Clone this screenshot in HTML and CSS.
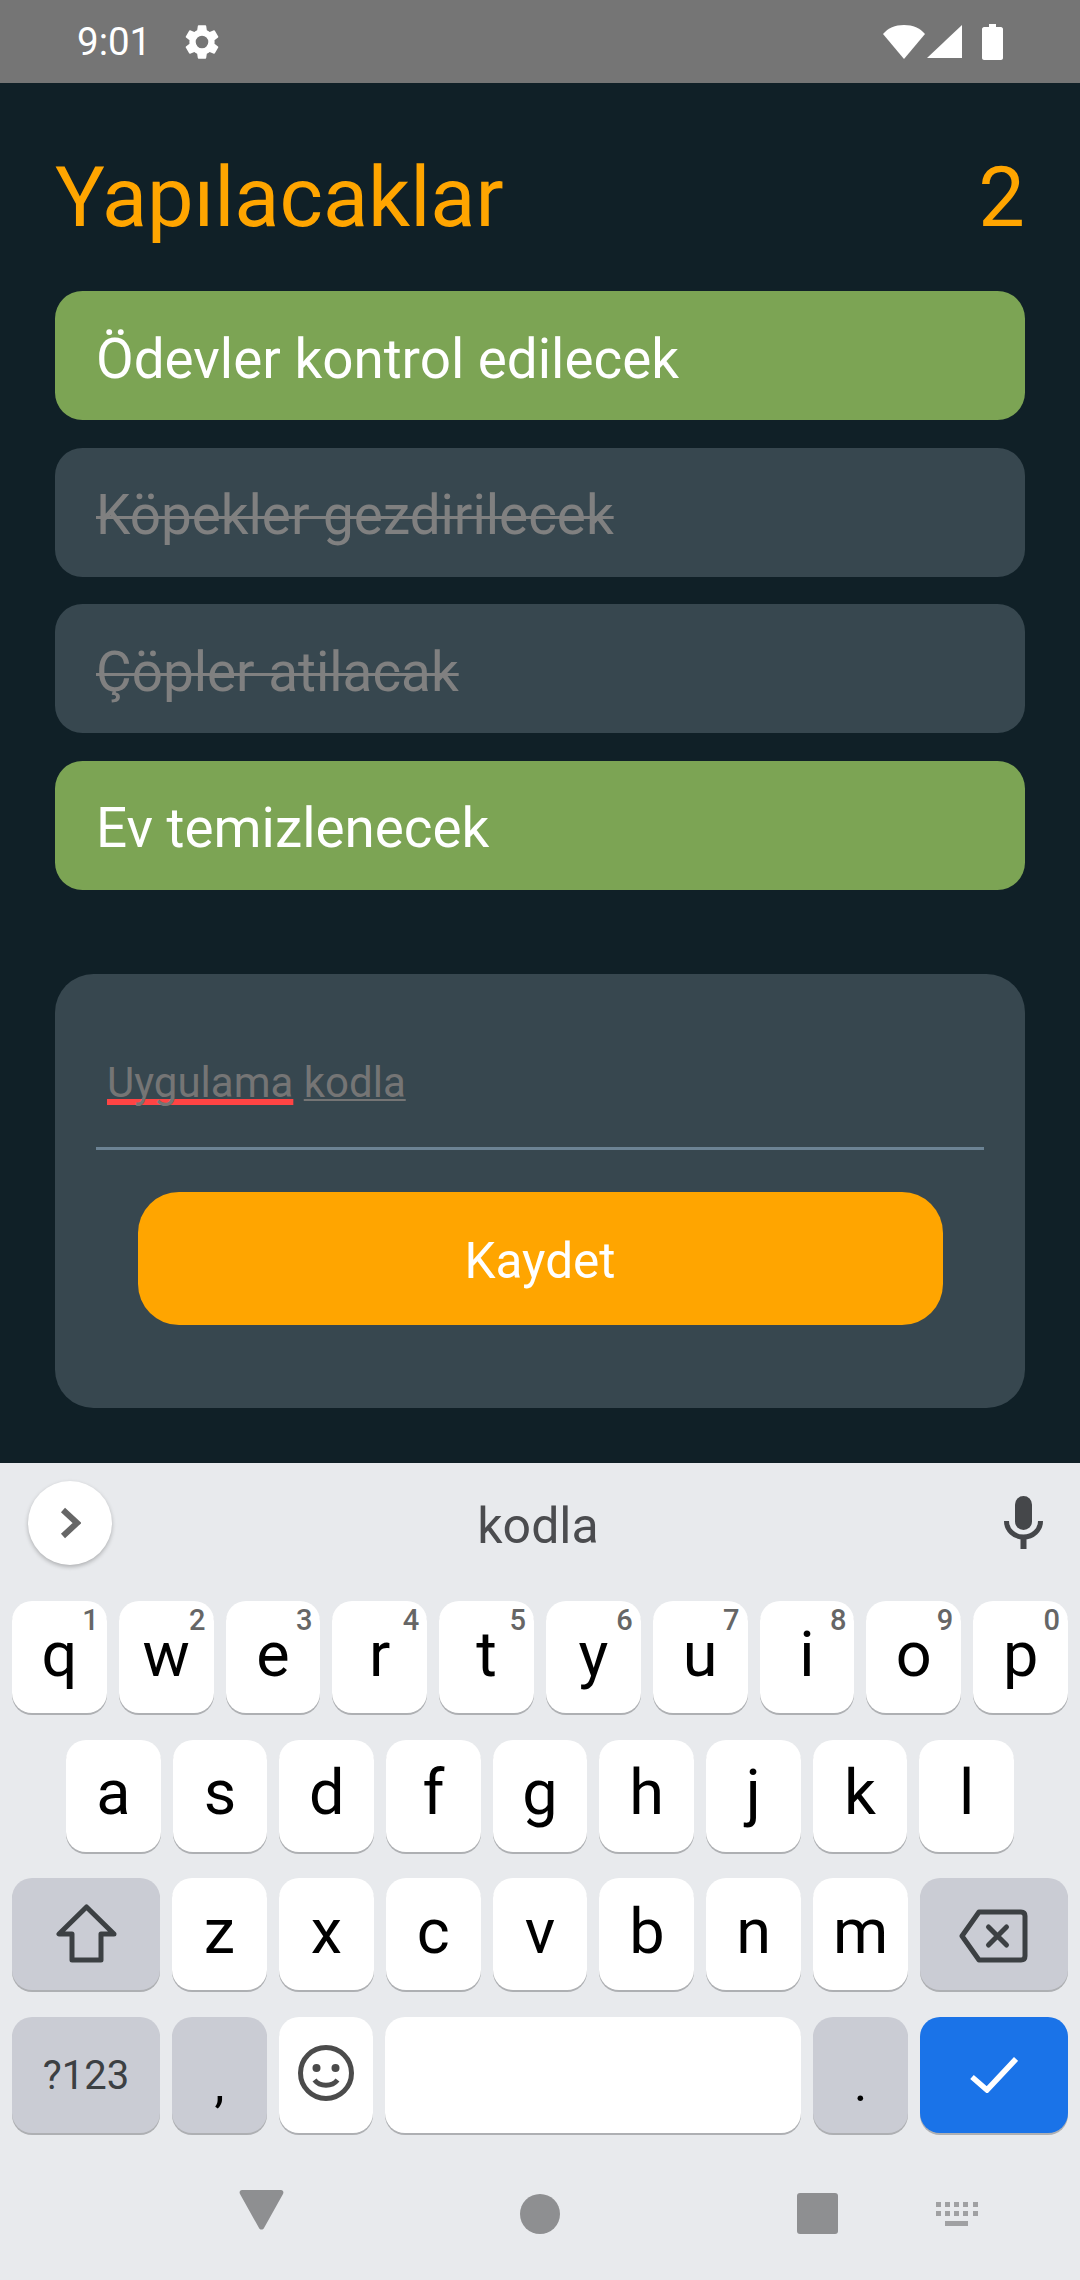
FILE: index.html
```html
<!DOCTYPE html>
<html lang="tr">
<head>
<meta charset="UTF-8" />
<meta name="viewport" content="width=device-width, initial-scale=1" />
<title>Yapılacaklar</title>
<link rel="stylesheet" href="styles.css">
</head>
<body>
  <div class="status-bar">
    <span class="clock">9:01</span>
    <svg class="gear" viewBox="0 0 24 24"><path d="M19.14 12.94c.04-.3.06-.61.06-.94s-.02-.64-.07-.94l2.03-1.58a.49.49 0 0 0 .12-.61l-1.92-3.32a.49.49 0 0 0-.59-.22l-2.39.96a7 7 0 0 0-1.62-.94l-.36-2.54a.48.48 0 0 0-.48-.41h-3.84a.47.47 0 0 0-.47.41l-.36 2.54c-.59.24-1.13.57-1.62.94l-2.39-.96a.48.48 0 0 0-.59.22L2.74 8.87a.48.48 0 0 0 .12.61l2.03 1.58c-.05.3-.09.63-.09.94s.02.64.07.94l-2.03 1.58a.49.49 0 0 0-.12.61l1.92 3.32c.12.22.37.29.59.22l2.39-.96c.5.38 1.03.7 1.62.94l.36 2.54c.05.24.24.41.48.41h3.84c.24 0 .44-.17.47-.41l.36-2.54c.59-.24 1.13-.56 1.62-.94l2.39.96c.22.08.47 0 .59-.22l1.92-3.32a.48.48 0 0 0-.12-.61l-2.01-1.58zM12 15.6a3.6 3.6 0 1 1 0-7.2 3.6 3.6 0 0 1 0 7.2z"/></svg>
    <svg class="wifi" viewBox="0 0 42 34"><path d="M21 0C30 0 37 3 42 9L21 34 0 9C5 3 12 0 21 0Z"/></svg>
    <svg class="signal" viewBox="0 0 35 33"><path d="M35 0V33H0Z"/></svg>
    <svg class="battery" viewBox="0 0 21 36"><path d="M7 0H14V3H19C20 3 21 4 21 5V34C21 35 20 36 19 36H2C1 36 0 35 0 34V5C0 4 1 3 2 3H7Z"/></svg>
  </div>

  <main class="app">
    <header class="app-header">
      <h1>Yapılacaklar</h1>
      <span class="count">2</span>
    </header>

    <ul class="todo-list">
      <li class="todo">Ödevler kontrol edilecek</li>
      <li class="todo done"><span>Köpekler gezdirilecek</span></li>
      <li class="todo done"><span>Çöpler atilacak</span></li>
      <li class="todo">Ev temizlenecek</li>
    </ul>

    <form class="todo-form">
      <div class="todo-input"><span class="misspelled">Uygulama</span> <span class="composing">kodla</span></div>
      <button type="button" class="save">Kaydet</button>
    </form>
  </main>

  <section class="keyboard">
    <div class="suggest">
      <div class="chip">
        <svg viewBox="0 0 21 32"><path d="M3 3L17 16 3 29" /></svg>
      </div>
      <span class="word">kodla</span>
      <svg class="mic" viewBox="0 0 39 53"><rect x="11" y="0" width="17" height="34" rx="8.5"/><path class="mic-yoke" d="M2.500 25C2.500 34 10 41 19.500 41S36.500 34 36.500 25"/><rect x="16.500" y="40" width="6" height="13"/></svg>
    </div>

    <div class="row">
      <div class="key">q<sup>1</sup></div>
      <div class="key">w<sup>2</sup></div>
      <div class="key">e<sup>3</sup></div>
      <div class="key">r<sup>4</sup></div>
      <div class="key">t<sup>5</sup></div>
      <div class="key">y<sup>6</sup></div>
      <div class="key">u<sup>7</sup></div>
      <div class="key">i<sup>8</sup></div>
      <div class="key">o<sup>9</sup></div>
      <div class="key">p<sup>0</sup></div>
    </div>
    <div class="row row-home">
      <div class="key">a</div>
      <div class="key">s</div>
      <div class="key">d</div>
      <div class="key">f</div>
      <div class="key">g</div>
      <div class="key">h</div>
      <div class="key">j</div>
      <div class="key">k</div>
      <div class="key">l</div>
    </div>
    <div class="row">
      <div class="key wide special">
        <svg class="shift" viewBox="0 0 61 59"><path d="M30.500 3L3 30H16V56H45V30H58Z"/></svg>
      </div>
      <div class="key">z</div>
      <div class="key">x</div>
      <div class="key">c</div>
      <div class="key">v</div>
      <div class="key">b</div>
      <div class="key">n</div>
      <div class="key">m</div>
      <div class="key wide special">
        <svg class="backspace" viewBox="0 0 69 54"><path d="M20 3H62C64.500 3 66 4.500 66 7V47C66 49.500 64.500 51 62 51H20L3 27Z"/><path d="M29.500 18L47.500 36M47.500 18L29.500 36"/></svg>
      </div>
    </div>
    <div class="row row-bottom">
      <div class="key wide special symbols">?123</div>
      <div class="key special punct">,</div>
      <div class="key">
        <svg class="emoji" viewBox="0 0 56 56"><circle class="face" cx="28" cy="28" r="25.500"/><circle cx="18.500" cy="23" r="4"/><circle cx="37.500" cy="23" r="4"/><path class="smile" d="M16.500 35C22 42 34 42 39.500 35"/></svg>
      </div>
      <div class="key space"></div>
      <div class="key special punct">.</div>
      <div class="key wide action">
        <svg class="check" viewBox="0 0 48 36"><path d="M2 20L17 33 46 2"/></svg>
      </div>
    </div>

    <nav class="nav-bar">
      <svg class="nav-back" viewBox="0 0 45 40"><path d="M3 0H42C44 0 45 2 44 4L25 38C24 40 21 40 20 38L1 4C0 2 1 0 3 0Z"/></svg>
      <span class="nav-home"></span>
      <span class="nav-recent"></span>
      <svg class="nav-kbd" viewBox="0 0 42 24"><path d="M0 0H5V5H0ZM9 0H14V5H9ZM18 0H23V5H18ZM27 0H32V5H27ZM37 0H42V5H37ZM0 9H5V14H0ZM9 9H14V14H9ZM18 9H23V14H18ZM27 9H32V14H27ZM37 9H42V14H37ZM9 19H32V24H9Z"/></svg>
    </nav>
  </section>
</body>
</html>
```

FILE: styles.css
```css
/* Reset some styles */
*, *::before, *::after {
  box-sizing: border-box;
}
body {
  margin: 0;
  width: 1080px;
  height: 2280px;
  display: flex;
  flex-direction: column;
  overflow: hidden;
  font-family: Roboto, "Noto Sans", sans-serif;
  background: #102027;
}

/* Status bar */
.status-bar {
  height: 83px;
  flex: none;
  display: flex;
  align-items: center;
  padding-left: 77px;
  background: #757575;
  color: #fff;
  fill: #fff;
}
.clock {
  font-size: 38.5px;
}
.gear {
  width: 42px;
  height: 42px;
  margin-left: 30px;
}
.wifi {
  width: 42px;
  height: 34px;
  margin: 0 2px 0 auto;
}
.signal {
  width: 35px;
  height: 33px;
}
.battery {
  width: 21px;
  height: 36px;
  margin: 0 77px 0 20px;
}

/* App */
.app {
  flex: 1;
  padding: 66px 55px 0;
}
.app-header {
  display: flex;
  justify-content: space-between;
  margin-bottom: 45px;
  color: #ffa500;
  font-size: 83px;
  line-height: 97px;
}
.app-header h1 {
  margin: 0;
  font-size: inherit;
  font-weight: 400;
}
.todo-list {
  list-style: none;
  margin: 0;
  padding: 0;
  display: flex;
  flex-direction: column;
  gap: 27.67px;
}
.todo {
  height: 129px;
  display: flex;
  align-items: center;
  padding: 6px 41px 0;
  border-radius: 27.5px;
  background: #7ca454;
  color: #fff;
  font-size: 54.8px;
}
.todo.done {
  background: #37474f;
  color: #808080;
}
.todo.done span {
  text-decoration: line-through;
  text-decoration-thickness: 3px;
}
.todo-form {
  margin-top: 84px;
  padding: 82px 41px 83px;
  border-radius: 38.5px;
  background: #37474f;
}
.todo-input {
  padding: 1px 0 38px 11px;
  border-bottom: 3.5px solid #6c8394;
  color: #757575;
  font-size: 42px;
  line-height: 52px;
}
.misspelled {
  text-decoration: underline #ff4444 6px;
  text-decoration-skip-ink: none;
  text-underline-offset: 2px;
}
.composing {
  text-decoration: underline #757575 2px;
  text-decoration-skip-ink: none;
  text-underline-offset: 2px;
}
.save {
  display: block;
  width: 805px;
  height: 133px;
  margin: 42px auto 0;
  padding: 5px 0 0;
  border: none;
  border-radius: 41px;
  background: #ffa500;
  color: #fff;
  font-family: inherit;
  font-size: 49.5px;
}

/* Keyboard */
.keyboard {
  height: 817px;
  flex: none;
  background: #e8eaed;
}
.suggest {
  height: 138px;
  display: flex;
  align-items: flex-start;
  padding: 18px 37px 0 28px;
}
.chip {
  width: 84px;
  height: 84px;
  display: flex;
  align-items: center;
  justify-content: center;
  border-radius: 50%;
  background: #fff;
  box-shadow: 0 2px 4px rgba(0, 0, 0, 0.25);
}
.chip svg {
  width: 21px;
  height: 32px;
  fill: none;
  stroke: #666;
  stroke-width: 6;
}
.word {
  flex: 1;
  padding: 3px 40px 0 0;
  text-align: center;
  color: #4b4c4f;
  font-size: 50px;
  line-height: 84px;
}
.mic {
  width: 39px;
  height: 53px;
  margin-top: 15px;
  fill: #45474a;
}
.mic-yoke {
  fill: none;
  stroke: #45474a;
  stroke-width: 5;
}
.row {
  height: 112px;
  display: flex;
  gap: 12px;
  padding: 0 12px;
  margin-bottom: 26.67px;
}
.row-home {
  padding: 0 66px;
}
.row-bottom {
  height: 116px;
  margin-bottom: 0;
}
.key {
  position: relative;
  flex: 1 1 0;
  min-width: 0;
  display: flex;
  align-items: center;
  justify-content: center;
  padding-bottom: 6px;
  border-radius: 20px;
  background: #fff;
  box-shadow: 0 2px 0 #aeb0b3;
  color: #000;
  font-size: 63px;
}
.key sup {
  position: absolute;
  top: 3px;
  right: 8px;
  color: #666;
  font-size: 29px;
  font-weight: 500;
  line-height: 33px;
}
.wide {
  flex: none;
  width: 148px;
}
.space {
  flex: none;
  width: 416px;
}
.special {
  background: #caccd4;
}
.symbols {
  padding: 2px 0 0;
  color: #3c4043;
  font-size: 40px;
}
.punct {
  padding: 18px 0 0;
  font-size: 50px;
}
.action {
  background: #1a73e8;
}
.shift, .backspace {
  fill: none;
  stroke: #3c4043;
  stroke-width: 5;
  stroke-linejoin: round;
  stroke-linecap: round;
}
.shift {
  width: 61px;
  height: 59px;
  margin-top: 4px;
}
.backspace {
  width: 69px;
  height: 54px;
  margin: 10px 2px 0 0;
}
.emoji {
  width: 56px;
  height: 56px;
  margin-top: 3px;
  fill: #4b4b4b;
}
.face, .smile {
  fill: none;
  stroke: #4b4b4b;
  stroke-width: 5;
}
.check {
  width: 48px;
  height: 36px;
  margin-top: 6px;
  fill: none;
  stroke: #fff;
  stroke-width: 5.500;
}

/* Navigation bar */
.nav-bar {
  height: 147px;
  display: flex;
  align-items: center;
  padding: 15px 0 0 239px;
}
.nav-back {
  width: 45px;
  height: 40px;
  margin-top: -8px;
  fill: #8e8f91;
}
.nav-home {
  width: 40px;
  height: 40px;
  margin-left: 236px;
  border-radius: 50%;
  background: #8e8f91;
}
.nav-recent {
  width: 41px;
  height: 41px;
  margin-left: 237px;
  border-radius: 3px;
  background: #8e8f91;
}
.nav-kbd {
  width: 42px;
  height: 24px;
  margin-left: 98px;
  fill: #a0a1a3;
}
```
